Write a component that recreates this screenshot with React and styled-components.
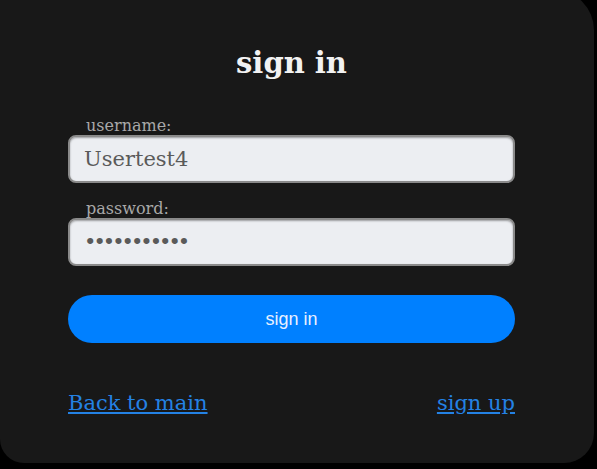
import React from 'react';
import styled, { createGlobalStyle } from 'styled-components';

const Global = createGlobalStyle`
  html, body {
    margin: 0;
    padding: 0;
    background: #000;
  }
  body {
    font-family: "DejaVu Serif", "Liberation Serif", serif;
  }
`;

const Card = styled.div`
  width: 594px;
  height: 473px;
  margin-top: -10px;
  background: #181818;
  border-radius: 0 40px 30px 24px;
  box-sizing: border-box;
  padding: 53px 79px 0 68px;
`;

const Title = styled.h1`
  margin: 0 0 34px;
  text-align: center;
  color: #f2f2f2;
  font-size: 29px;
  font-weight: bold;
  line-height: 40px;
`;

const Form = styled.form`
  display: flex;
  flex-direction: column;
`;

const Label = styled.label`
  color: #a8a8a8;
  font-size: 16px;
  line-height: 18px;
  padding-left: 18px;
`;

const Input = styled.input`
  box-sizing: border-box;
  height: 48px;
  margin-bottom: 17px;
  padding: 0 14px;
  border: 2px solid #8a8a8a;
  border-radius: 8px;
  background: #eceef2;
  color: #5a5a5a;
  font-family: inherit;
  font-size: 21px;
  letter-spacing: ${(p) => (p.type === 'password' ? '-3px' : '0')};
  outline: none;
  box-shadow: inset 0 1px 2px rgba(0, 0, 0, 0.35);
`;

const Button = styled.button`
  height: 48px;
  margin-top: 12px;
  border: none;
  border-radius: 24px;
  background: #0080ff;
  color: #e8f0ff;
  font-family: "Liberation Sans", Arial, sans-serif;
  font-size: 18px;
  cursor: pointer;
`;

const Links = styled.div`
  display: flex;
  justify-content: space-between;
  margin-top: 48px;
`;

const Link = styled.a`
  color: #2482e4;
  font-size: 21px;
  text-decoration: underline;
  cursor: pointer;
`;

const App = () => (
  <>
    <Global />
    <Card>
      <Title>sign in</Title>
      <Form onSubmit={(e) => e.preventDefault()}>
        <Label>username:</Label>
        <Input type="text" defaultValue="Usertest4" />
        <Label>password:</Label>
        <Input type="password" defaultValue="passwordtst" />
        <Button type="submit">sign in</Button>
      </Form>
      <Links>
        <Link href="#">Back to main</Link>
        <Link href="#">sign up</Link>
      </Links>
    </Card>
  </>
);

export default App;
